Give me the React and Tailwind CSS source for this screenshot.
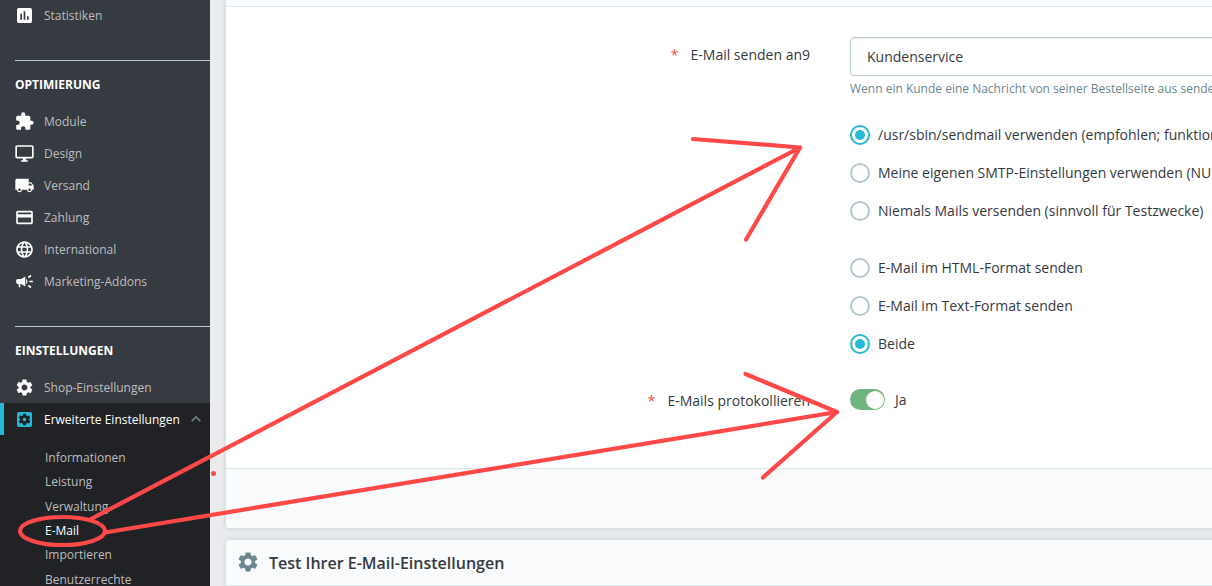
import React, { useState } from 'react';
import {
  MdAssessment,
  MdExtension,
  MdLocalShipping,
  MdPayment,
  MdLanguage,
  MdCampaign,
  MdSettings,
  MdSettingsApplications,
  MdKeyboardArrowUp,
} from 'react-icons/md';

// outlined monitor, the packaged one has a filled screen
function DesktopIcon({ className }) {
  return (
    <svg className={className} viewBox="0 0 24 24" fill="currentColor">
      <path d="M21 2H3c-1.1 0-2 .9-2 2v12c0 1.1.9 2 2 2h7v2H8v2h8v-2h-2v-2h7c1.1 0 2-.9 2-2V4c0-1.1-.9-2-2-2zm0 14H3V4h18v12z" />
    </svg>
  );
}

const OPTIMIERUNG = [
  { icon: MdExtension, label: 'Module' },
  { icon: DesktopIcon, label: 'Design' },
  { icon: MdLocalShipping, label: 'Versand' },
  { icon: MdPayment, label: 'Zahlung' },
  { icon: MdLanguage, label: 'International' },
  { icon: MdCampaign, label: 'Marketing-Addons' },
];

const SUBMENU = ['Informationen', 'Leistung', 'Verwaltung', 'E-Mail', 'Importieren', 'Benutzerrechte'];

const METHODS = [
  '/usr/sbin/sendmail verwenden (empfohlen; funktioniert in den meisten Fällen)',
  'Meine eigenen SMTP-Einstellungen verwenden (NUR für erfahrene Benutzer)',
  'Niemals Mails versenden (sinnvoll für Testzwecke)',
];

const FORMATS = ['E-Mail im HTML-Format senden', 'E-Mail im Text-Format senden', 'Beide'];

function NavItem({ icon: Icon, label }) {
  return (
    <a href="#" className="flex h-8 items-center pl-[15px] text-xs whitespace-nowrap text-[#bebebe]">
      <Icon className="mr-[9px] h-5 w-5 shrink-0 -translate-x-[0.5px] translate-y-[0.5px] text-white" />
      <span className="pt-0.5">{label}</span>
    </a>
  );
}

function NavTitle({ children }) {
  return (
    <div className="ml-[15px] h-[45px] border-t border-[#bbcdd2] pt-3.5 text-xs leading-[19px] font-bold text-white">
      {children}
    </div>
  );
}

function Sidebar() {
  return (
    <nav className="h-full w-[210px] shrink-0 overflow-hidden bg-[#363a41]">
      <div className="-mt-px mb-[29px]">
        <NavItem icon={MdAssessment} label="Statistiken" />
      </div>
      <NavTitle>OPTIMIERUNG</NavTitle>
      <div className="mb-[29px]">
        {OPTIMIERUNG.map((item) => (
          <NavItem key={item.label} icon={item.icon} label={item.label} />
        ))}
      </div>
      <NavTitle>EINSTELLUNGEN</NavTitle>
      <NavItem icon={MdSettings} label="Shop-Einstellungen" />
      <div className="bg-[#202226]">
        <a href="#" className="flex h-8 items-center border-l-4 border-[#25b9d7] pl-[11px] text-xs whitespace-nowrap text-white">
          <MdSettingsApplications className="mr-[9px] h-5 w-5 shrink-0 -translate-x-[0.5px] translate-y-[0.5px] text-[#25b9d7]" />
          <span className="pt-0.5">Erweiterte Einstellungen</span>
          <MdKeyboardArrowUp className="ml-1.5 h-5 w-5 shrink-0 text-[#6c868e]" />
        </a>
        <ul className="pt-[10.8px] pl-[45px]">
          {SUBMENU.map((label) => (
            <li key={label} className={`h-[24.4px] text-xs leading-[24.4px] whitespace-nowrap ${label === 'E-Mail' ? 'text-white' : 'text-[#bebebe]'}`}>
              {label}
            </li>
          ))}
        </ul>
      </div>
    </nav>
  );
}

function Label({ children }) {
  return (
    <div className="w-[584px] shrink-0 text-right leading-[21px]">
      <span className="mr-3 text-[#f54c3e]">*</span>
      {children}
    </div>
  );
}

function Radio({ label, checked, onChange }) {
  return (
    <button type="button" onClick={onChange} className="flex h-[38px] items-center whitespace-nowrap">
      <span
        className={`mr-2 flex h-5 w-5 shrink-0 items-center justify-center rounded-full border-2 bg-white ${
          checked ? 'border-[#25b9d7]' : 'border-[#b3c7cd]'
        }`}
      >
        {checked && <span className="h-2.5 w-2.5 rounded-full bg-[#25b9d7]" />}
      </span>
      {label}
    </button>
  );
}

// hand-drawn arrows from the menu entry to the two settings
function Markup() {
  return (
    <svg
      className="pointer-events-none absolute inset-0"
      width="1212"
      height="586"
      fill="none"
      stroke="#ff4848"
      strokeWidth="4.2"
      strokeLinecap="round"
      strokeLinejoin="round"
    >
      <ellipse cx="62.5" cy="531" rx="42.5" ry="14" />
      <path d="M91 519 800 147.5M693 139 800 147.5 746 239.5" />
      <path d="M105 532.5 837 412M745.5 374 837 412 763 477.5" />
      <circle cx="213.5" cy="473.5" r="2.5" fill="#ff4848" stroke="none" />
    </svg>
  );
}

export default function App() {
  const [method, setMethod] = useState(0);
  const [format, setFormat] = useState(2);
  const [log, setLog] = useState(true);

  return (
    <div className="relative flex h-[586px] w-[1212px] overflow-hidden bg-[#eaebec] font-['Open_Sans',sans-serif] text-sm text-[#363a41]">
      <Sidebar />
      <main className="min-w-0 flex-1 pl-4">
        <section className="w-[1100px] rounded-b-[4px] bg-white shadow-[0_0_4px_1px_rgba(108,134,142,0.18)]">
          <div className="h-[7px] border-b border-[#dbe6e9] bg-[#fafbfc]" />
          <div className="h-[461px] pt-[30px]">
            <div className="flex items-start">
              <div className="pt-[7px]">
                <Label>E-Mail senden an9</Label>
              </div>
              <div className="ml-10">
                <div className="flex h-[39px] w-[440px] items-center rounded-[4px] border border-[#bbcdd2] pl-4 shadow-[inset_0_1px_1px_rgba(0,0,0,0.06)]">
                  Kundenservice
                </div>
                <p className="mt-1 text-xs leading-[18px] whitespace-nowrap text-[#6c868e]">
                  Wenn ein Kunde eine Nachricht von seiner Bestellseite aus sendet
                </p>
              </div>
            </div>
            <div className="mt-[18px] ml-[624px]">
              {METHODS.map((label, i) => (
                <Radio key={label} label={label} checked={method === i} onChange={() => setMethod(i)} />
              ))}
            </div>
            <div className="mt-[19px] ml-[624px]">
              {FORMATS.map((label, i) => (
                <Radio key={label} label={label} checked={format === i} onChange={() => setFormat(i)} />
              ))}
            </div>
            <div className="mt-[26px] flex items-start">
              <div className="pt-[1px]">
                <Label>E-Mails protokollieren</Label>
              </div>
              <button type="button" onClick={() => setLog(!log)} className="ml-10 flex items-center">
                <span className={`flex h-[21px] w-[35px] items-center rounded-full px-px ${log ? 'justify-end bg-[#70b580]' : 'bg-[#b3c7cd]'}`}>
                  <span className="h-[18px] w-[18px] rounded-full bg-white" />
                </span>
                <span className="ml-2.5">{log ? 'Ja' : 'Nein'}</span>
              </button>
            </div>
          </div>
          <div className="h-[60px] rounded-b-[4px] border-t border-[#dbe6e9] bg-[#fafbfc]" />
        </section>
        <section className="mt-3 w-[1100px] rounded-t-[4px] bg-white shadow-[0_0_4px_1px_rgba(108,134,142,0.18)]">
          <h3 className="flex h-[46px] items-center rounded-t-[4px] border-b border-[#dbe6e9] bg-[#fafbfc] pl-2.5 text-base font-semibold">
            <MdSettings className="mr-[9px] h-6 w-6 -translate-y-px text-[#6c868e]" />
            Test Ihrer E-Mail-Einstellungen
          </h3>
        </section>
      </main>
      <Markup />
    </div>
  );
}
